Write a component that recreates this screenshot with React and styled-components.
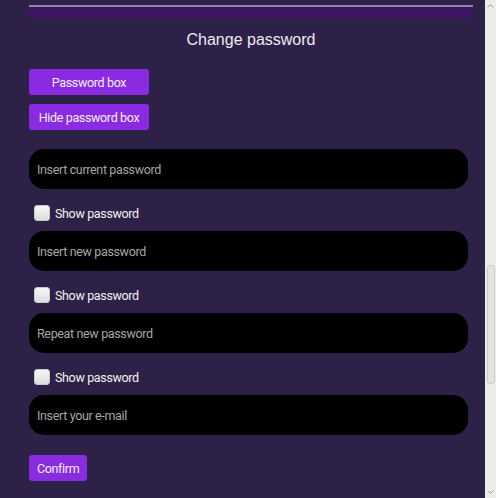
import React from 'react';
import styled, { createGlobalStyle } from 'styled-components';

const GlobalStyle = createGlobalStyle`
  body {
    margin: 0;
    background: #2e2147;
    overflow: hidden;
  }
`;

const uiFont = `"Segoe UI", Roboto, "Noto Sans", sans-serif`;

export default function App() {
  return (
    <>
      <GlobalStyle />
      <Screen>
        <Content>
          <TopBar />
          <Title>Change password</Title>
          <ButtonStack>
            <Button>Password box</Button>
            <Button>Hide password box</Button>
          </ButtonStack>
          <Field type="password" placeholder="Insert current password" />
          <CheckRow>
            <Check type="checkbox" />
            Show password
          </CheckRow>
          <Field type="password" placeholder="Insert new password" />
          <CheckRow>
            <Check type="checkbox" />
            Show password
          </CheckRow>
          <Field type="password" placeholder="Repeat new password" />
          <CheckRow>
            <Check type="checkbox" />
            Show password
          </CheckRow>
          <Field type="email" placeholder="Insert your e-mail" />
          <ConfirmBtn>Confirm</ConfirmBtn>
        </Content>
        <Scrollbar>
          <Arrow>
            <svg width="7" height="4" viewBox="0 0 7 4">
              <polyline points="0.5,3.5 3.5,0.5 6.5,3.5" fill="none" stroke="#9a9a9a" strokeWidth="1" />
            </svg>
          </Arrow>
          <Track>
            <Thumb />
          </Track>
          <Arrow>
            <svg width="7" height="4" viewBox="0 0 7 4">
              <polyline points="0.5,0.5 3.5,3.5 6.5,0.5" fill="none" stroke="#9a9a9a" strokeWidth="1" />
            </svg>
          </Arrow>
        </Scrollbar>
      </Screen>
    </>
  );
}

const Screen = styled.div`
  display: flex;
  height: 498px;
  overflow: hidden;
`;

const Content = styled.main`
  flex: 1;
  padding: 5px 12px 0 29px;
  display: flex;
  flex-direction: column;
  align-items: flex-start;
`;

const TopBar = styled.div`
  align-self: stretch;
  height: 11px;
  border-top: 2px solid #8f84ab;
  background: #3d1563;
`;

const Title = styled.h2`
  align-self: stretch;
  margin: 13px 0 20px;
  font-family: "Liberation Sans", Arial, sans-serif;
  font-size: 16px;
  font-weight: normal;
  line-height: 18px;
  color: #ececf4;
  text-align: center;
`;

const ButtonStack = styled.div`
  display: flex;
  flex-direction: column;
  gap: 9px;
  width: 120px;
  margin-bottom: 19px;
`;

const Button = styled.button`
  height: 26px;
  padding: 0 8px;
  border: none;
  border-radius: 3px;
  background: #8a2be2;
  color: #f4eefb;
  font-family: ${uiFont};
  font-size: 12.5px;
  letter-spacing: -0.35px;
  white-space: nowrap;
  cursor: pointer;
`;

const ConfirmBtn = styled(Button)`
  margin-top: 20px;
`;

const Field = styled.input`
  box-sizing: border-box;
  width: 439px;
  height: 40px;
  padding: 0 8px;
  border: none;
  border-radius: 15px;
  background: #000;
  color: #ddd;
  font-family: ${uiFont};
  font-size: 12.5px;
  letter-spacing: -0.35px;
  outline: none;

  &::placeholder {
    color: #a6a6a6;
  }
`;

const CheckRow = styled.label`
  display: flex;
  align-items: center;
  gap: 5px;
  height: 16px;
  padding: 16px 0 10px 5px;
  color: #f2f2f2;
  font-family: ${uiFont};
  font-size: 12.5px;
  letter-spacing: -0.35px;
`;

const Check = styled.input`
  appearance: none;
  box-sizing: border-box;
  width: 16px;
  height: 16px;
  margin: 0;
  border: 1px solid #c9c9c9;
  border-radius: 3px;
  background: linear-gradient(#f6f6f6, #dedede);
`;

const Scrollbar = styled.div`
  width: 11px;
  display: flex;
  flex-direction: column;
  background: #ececec;
`;

const Arrow = styled.div`
  height: 12px;
  display: flex;
  align-items: center;
  justify-content: center;
`;

const Track = styled.div`
  flex: 1;
  padding-top: 253px;
`;

const Thumb = styled.div`
  box-sizing: border-box;
  width: 8px;
  height: 119px;
  margin-left: 2px;
  border: 1px solid #cacaca;
  border-radius: 3px;
  background: #e3e3e3;
`;
